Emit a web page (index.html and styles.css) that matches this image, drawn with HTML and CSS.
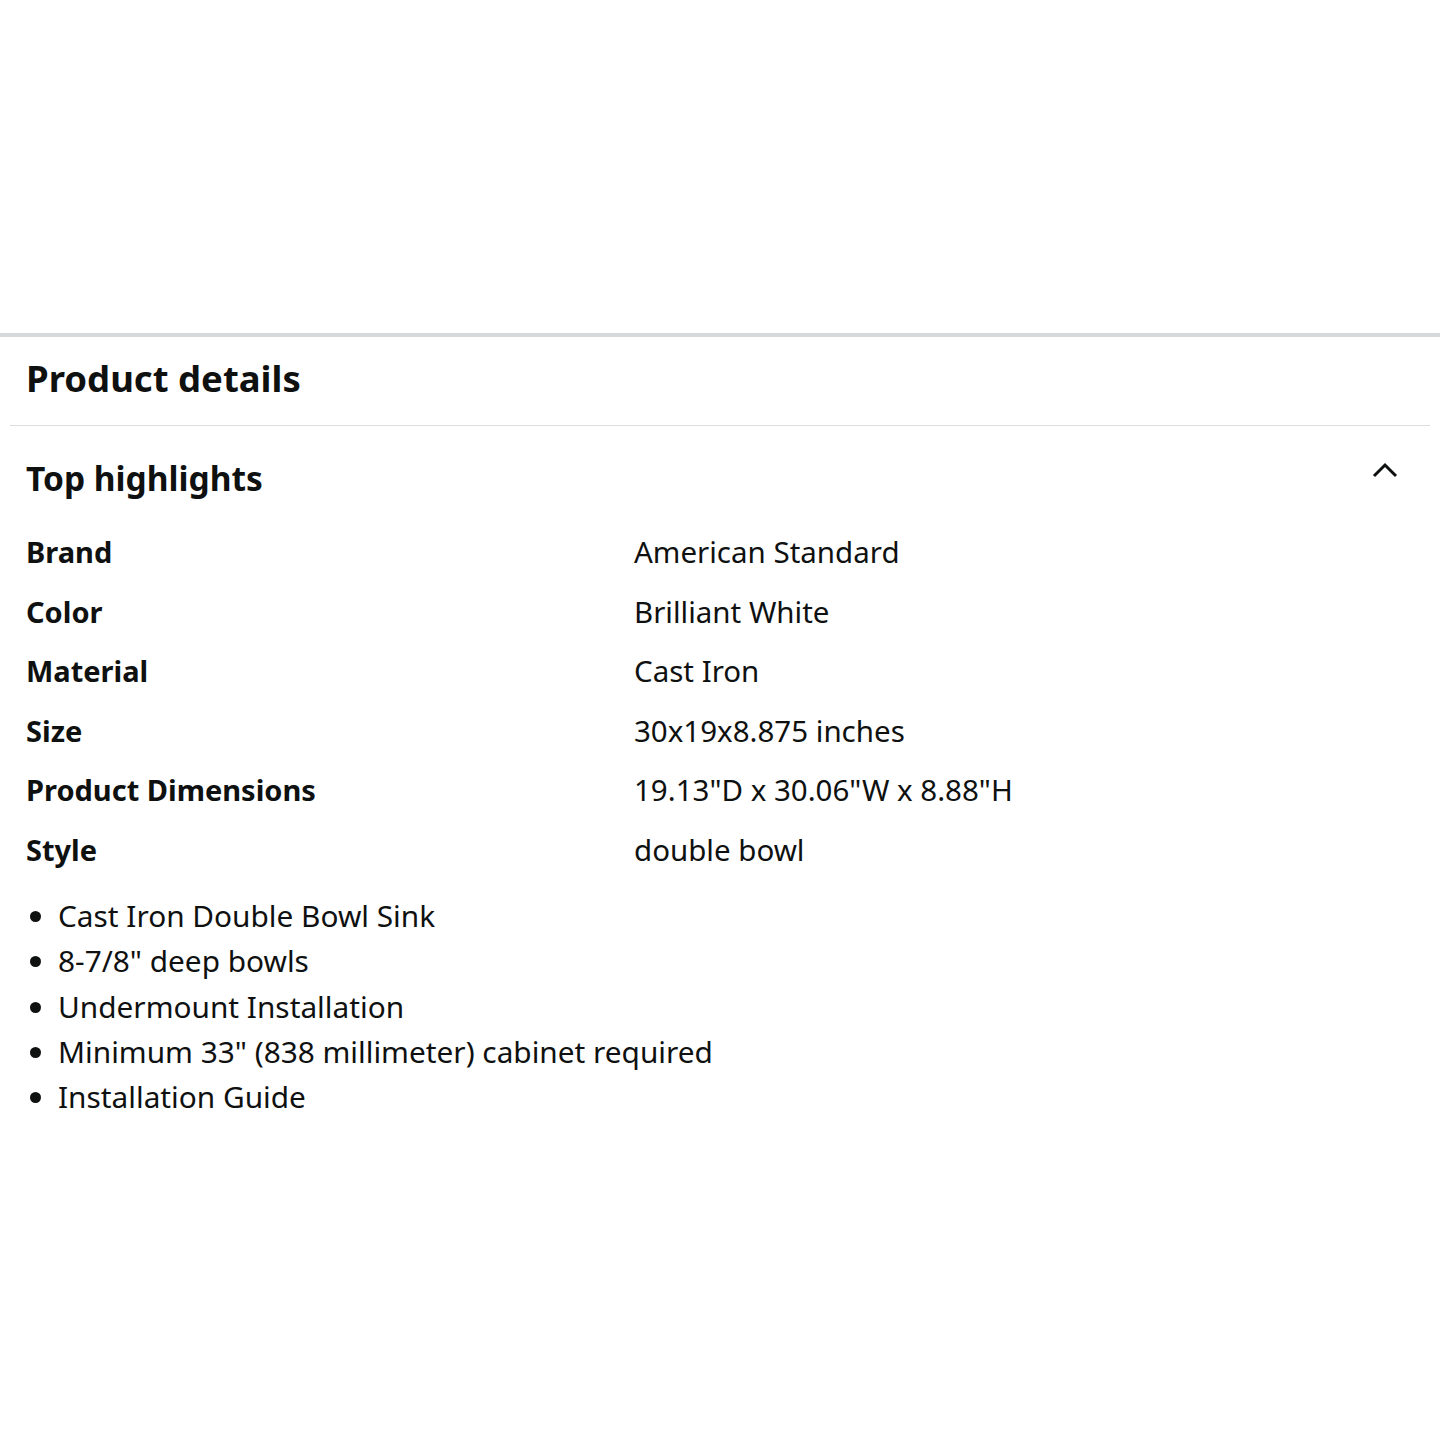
FILE: index.html
```html
<!DOCTYPE html>
<html>
<head>
<meta charset="utf-8">
<link rel="stylesheet" href="styles.css">
</head>
<body>
<div class="top-space"></div>
<section class="details">
  <h1 class="title">Product details</h1>
  <div class="rule"></div>
  <div class="highlights-head">
    <h2 class="subtitle">Top highlights</h2>
    <svg class="chevron" width="26" height="16" viewBox="0 0 26 16"><path d="M2 14 L13 3 L24 14" fill="none" stroke="#0f1111" stroke-width="3"/></svg>
  </div>
  <div class="specs">
    <div class="label">Brand</div><div class="value">American Standard</div>
    <div class="label">Color</div><div class="value">Brilliant White</div>
    <div class="label">Material</div><div class="value">Cast Iron</div>
    <div class="label">Size</div><div class="value">30x19x8.875 inches</div>
    <div class="label">Product Dimensions</div><div class="value">19.13"D x 30.06"W x 8.88"H</div>
    <div class="label">Style</div><div class="value">double bowl</div>
  </div>
  <ul class="bullets">
    <li>Cast Iron Double Bowl Sink</li>
    <li>8-7/8" deep bowls</li>
    <li>Undermount Installation</li>
    <li>Minimum 33" (838 millimeter) cabinet required</li>
    <li>Installation Guide</li>
  </ul>
</section>
</body>
</html>
```

FILE: styles.css
```css
html, body {
  margin: 0;
  padding: 0;
  background: #ffffff;
  color: #0f1111;
  font-family: "Noto Sans", "Open Sans", sans-serif;
}
.top-space {
  height: 333px;
}
.details {
  border-top: 4px solid #d5d9d9;
}
.title {
  margin: 0;
  padding: 18px 26px 0;
  height: 70px;
  font-size: 36.5px;
  font-weight: 700;
  line-height: 46px;
}
.rule {
  margin: 0 10px;
  height: 1px;
  background: #dddddd;
}
.highlights-head {
  display: flex;
  justify-content: space-between;
  align-items: flex-start;
  padding: 30px 42px 0 26px;
}
.subtitle {
  margin: 0;
  font-size: 33.5px;
  font-weight: 700;
  line-height: 44px;
}
.chevron {
  margin-top: 6px;
}
.specs {
  display: grid;
  grid-template-columns: 608px 1fr;
  padding: 22px 26px 0;
  font-size: 29.5px;
  line-height: 59.5px;
}
.label {
  font-weight: 700;
  font-size: 29px;
}
.bullets {
  margin: 0;
  padding: 14px 0 0 58px;
  font-size: 29.8px;
  line-height: 45.25px;
}
```
